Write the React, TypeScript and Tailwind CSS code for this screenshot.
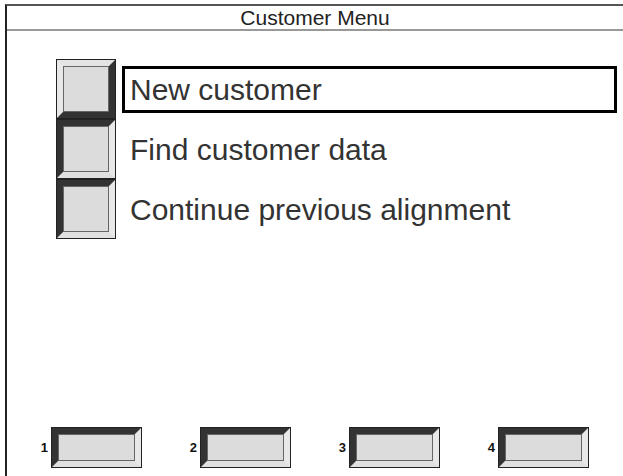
import React from "react";

const font = { fontFamily: '"Liberation Sans", Arial, sans-serif' };

function SideButton({ raised }: { raised: boolean }) {
  return (
    <div className="w-[60px] h-[60px] border border-[#222] bg-[#dcdcdc]">
      <div
        className={
          "w-full h-full border-[6px] " +
          (raised
            ? "border-t-[#e4e4e4] border-l-[#e8e8e8] border-r-[#333] border-b-[#333]"
            : "border-t-[#333] border-l-[#333] border-r-[#e8e8e8] border-b-[#e0e0e0]")
        }
      >
        <div className="w-full h-full border border-[#666] bg-[#dcdcdc]" />
      </div>
    </div>
  );
}

function FooterButton({ n }: { n: number }) {
  return (
    <div className="flex items-center gap-[3px]">
      <span className="w-[11px] text-right text-[13px] font-bold text-[#111]">{n}</span>
      <div className="w-[91px] h-[41px] border border-[#222]">
        <div className="w-full h-full border-[6px] border-t-[#333] border-l-[#333] border-r-[#e8e8e8] border-b-[#e0e0e0]">
          <div className="w-full h-full border border-[#666] bg-[#dcdcdc]" />
        </div>
      </div>
    </div>
  );
}

const items = ["New customer", "Find customer data", "Continue previous alignment"];

export default function App() {
  return (
    <div className="w-[623px] h-[476px] bg-white overflow-hidden" style={font}>
      <div className="ml-[5px] mt-[4px] h-[472px] border-t-2 border-t-[#555] border-l-2 border-l-[#222] flex flex-col">
        <div className="h-[23px] flex items-center justify-center text-[21px] text-[#222] leading-none">
          Customer Menu
        </div>
        <div className="h-[2px] bg-[#999]" />
        <div className="pt-[28px] pl-[49px] flex flex-col">
          {items.map((t, i) => (
            <div key={t} className="flex items-center h-[60px]">
              <SideButton raised={i === 0} />
              <div
                className={
                  "ml-[6px] w-[495px] h-[47px] flex items-center pl-[5px] text-[30px] text-[#333] " +
                  (i === 0 ? "border-[3px] border-black" : "border-[3px] border-transparent")
                }
              >
                {t}
              </div>
            </div>
          ))}
        </div>
        <div className="mt-[188px] pl-[30px] flex gap-[44px]">
          {[1, 2, 3, 4].map((n) => (
            <FooterButton key={n} n={n} />
          ))}
        </div>
      </div>
    </div>
  );
}
